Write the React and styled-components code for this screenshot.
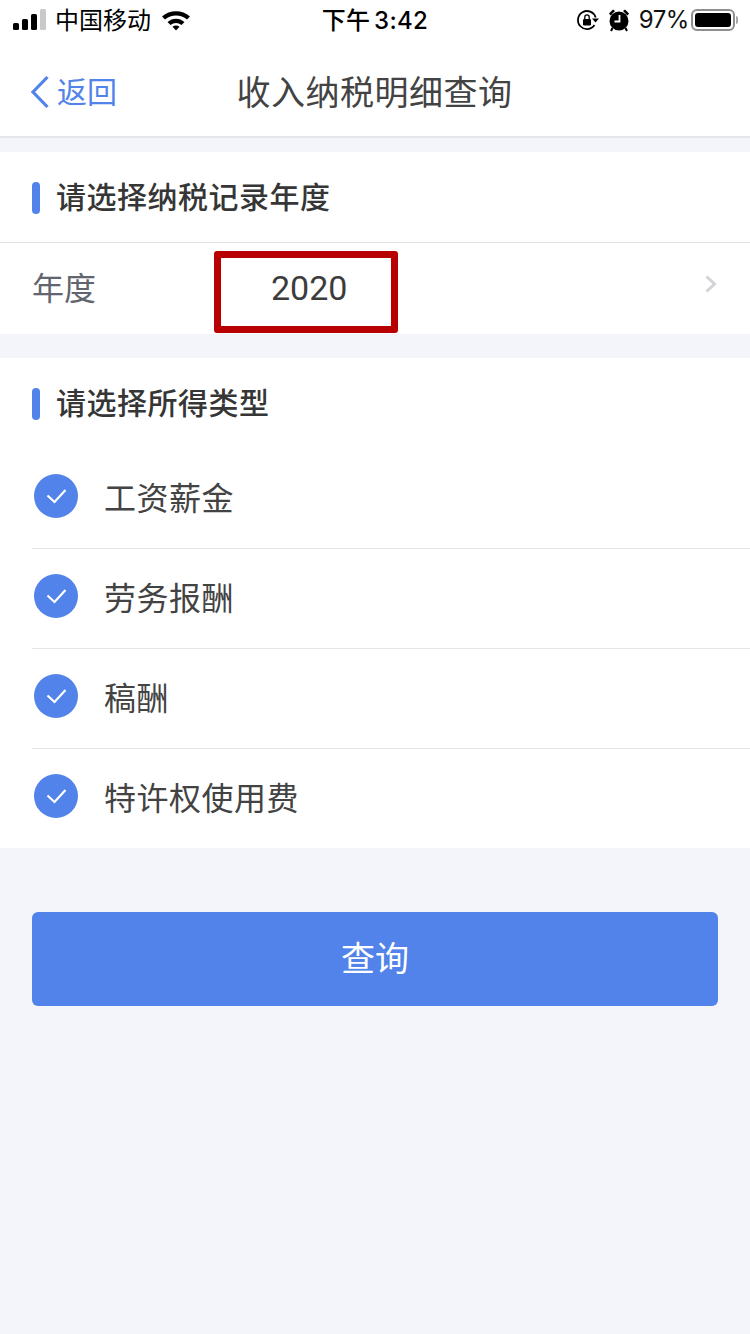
import React from 'react';
import styled, { createGlobalStyle } from 'styled-components';

const CJK = `"Noto Sans CJK SC", "Noto Sans", sans-serif`;
const STATUS = `Inter, "Noto Sans CJK SC", sans-serif`;

const incomeTypes = ['工资薪金', '劳务报酬', '稿酬', '特许权使用费'];

const GlobalStyle = createGlobalStyle`
  html, body {
    margin: 0;
    padding: 0;
    background: #f4f5fa;
    font-family: ${CJK};
  }
  * {
    box-sizing: border-box;
  }
`;

const App = () => {
  return (
    <Page>
      <GlobalStyle />
      <StatusBar>
        <StatusLeft>
          <svg width="34" height="22" viewBox="0 0 34 22">
            <rect x="1" y="14" width="6" height="7" rx="1.5" fill="#000" />
            <rect x="10" y="10" width="6" height="11" rx="1.5" fill="#000" />
            <rect x="19" y="5" width="6" height="16" rx="1.5" fill="#000" />
            <rect x="28" y="0" width="6" height="21" rx="1.5" fill="#c9c9c9" />
          </svg>
          <Carrier>中国移动</Carrier>
          <svg width="30" height="22" viewBox="0 0 30 22">
            <path d="M1 7.500C8.500 .5 21.500 .5 29 7.500L26 10.500C20 5 10 5 4 10.500Z" fill="#000" />
            <path d="M6.500 13C11.500 8.500 18.500 8.500 23.500 13L20.500 16C17 13.200 13 13.200 9.500 16Z" fill="#000" />
            <path d="M11.500 17.800C13.500 16.200 16.500 16.200 18.500 17.800L15 21.500Z" fill="#000" />
          </svg>
        </StatusLeft>
        <Clock>下午 3:42</Clock>
        <StatusRight>
          <svg width="24" height="24" viewBox="0 0 24 24">
            <path d="M19.500 17A9 9 0 1 1 20.600 9.500" fill="none" stroke="#000" strokeWidth="1.800" />
            <path d="M17 10.500h7l-3.500 4z" fill="#000" />
            <rect x="8" y="11" width="8" height="6.500" rx="1.200" fill="#000" />
            <path d="M9.800 11.500V9a2.200 2.200 0 0 1 4.400 0V11.500" fill="none" stroke="#000" strokeWidth="1.300" />
          </svg>
          <svg width="24" height="24" viewBox="0 0 24 24">
            <circle cx="12" cy="13" r="9.500" fill="#000" />
            <path d="M12.500 7V13.500H7.500" fill="none" stroke="#fff" strokeWidth="1.800" />
            <path d="M2 5.500L6 1.500L8 3L3.500 7.500Z M22 5.500L18 1.500L16 3L20.500 7.500Z" fill="#000" />
            <path d="M5.500 20L4 23M18.500 20L20 23" stroke="#000" strokeWidth="2" />
          </svg>
          <Percent>97%</Percent>
          <Battery>
            <BatteryFill />
          </Battery>
          <BatteryCap />
        </StatusRight>
      </StatusBar>

      <NavBar>
        <BackLink>
          <svg width="20" height="34" viewBox="0 0 20 34">
            <path d="M17.500 2L3 17L17.500 32" fill="none" stroke="#5283ea" strokeWidth="3.200" />
          </svg>
          <BackText>返回</BackText>
        </BackLink>
        <NavTitle>收入纳税明细查询</NavTitle>
      </NavBar>

      <Section $gap={14}>
        <SectionHead $divided>
          <Mark />
          <SectionTitle>请选择纳税记录年度</SectionTitle>
        </SectionHead>
        <YearRow>
          <YearLabel>年度</YearLabel>
          <YearValue>2020</YearValue>
          <Chevron width="14" height="20" viewBox="0 0 14 20">
            <path d="M2.500 2.500L10.500 10L2.500 17.500" fill="none" stroke="#d3d4d8" strokeWidth="3" />
          </Chevron>
          <Highlight />
        </YearRow>
      </Section>

      <Section $gap={24}>
        <SectionHead>
          <Mark />
          <SectionTitle>请选择所得类型</SectionTitle>
        </SectionHead>
        <TypeList>
          {incomeTypes.map((name) => (
            <TypeRow key={name}>
              <Check>
                <svg width="24" height="24" viewBox="0 0 24 24">
                  <path d="M3.500 11.500L10.500 18L21.500 6" fill="none" stroke="#fff" strokeWidth="2.200" />
                </svg>
              </Check>
              <TypeName>{name}</TypeName>
            </TypeRow>
          ))}
        </TypeList>
      </Section>

      <QueryButton>查询</QueryButton>
    </Page>
  );
};

const Page = styled.div`
  width: 750px;
  height: 1334px;
  overflow: hidden;
  background: #f4f5fa;
`;

const StatusBar = styled.div`
  height: 40px;
  padding: 0 12px;
  display: grid;
  grid-template-columns: 1fr auto 1fr;
  align-items: center;
  background: #fff;
  color: #000;
`;

const StatusLeft = styled.div`
  display: flex;
  align-items: center;
`;

const Carrier = styled.span`
  margin: 0 10px 0 9px;
  font-size: 24px;
  line-height: 40px;
  position: relative;
  top: -1px;
`;

const Clock = styled.span`
  font-family: ${STATUS};
  font-size: 24px;
  font-weight: 500;
  word-spacing: -3px;
  letter-spacing: 0.3px;
  line-height: 42px;
  height: 40px;
`;

const StatusRight = styled.div`
  display: flex;
  align-items: center;
  justify-content: flex-end;
  gap: 8px;
`;

const Percent = styled.span`
  font-family: ${STATUS};
  font-size: 24px;
  line-height: 40px;
  letter-spacing: -0.4px;
  color: #111;
`;

const Battery = styled.div`
  width: 44px;
  height: 22px;
  margin-left: -6px;
  padding: 2px;
  border: 2px solid #8f8f8f;
  border-radius: 6px;
`;

const BatteryFill = styled.div`
  width: 36px;
  height: 14px;
  border-radius: 3px;
  background: #000;
`;

const BatteryCap = styled.div`
  width: 2px;
  height: 8px;
  margin-left: -7px;
  background: #a9a9a9;
  border-radius: 0 2px 2px 0;
`;

const NavBar = styled.div`
  position: relative;
  height: 98px;
  display: flex;
  align-items: center;
  justify-content: center;
  padding-top: 6px;
  background: #fff;
  border-bottom: 2px solid #e5e6ea;
`;

const BackLink = styled.a`
  position: absolute;
  left: 30px;
  top: 35px;
  display: flex;
  align-items: center;
  gap: 7px;
  color: #5283ea;
`;

const BackText = styled.span`
  font-size: 30px;
  line-height: 34px;
  position: relative;
  top: -2px;
`;

const NavTitle = styled.div`
  font-size: 34px;
  line-height: 48px;
  letter-spacing: 0.5px;
  margin-left: -1px;
  color: #434343;
`;

const Section = styled.section`
  margin-top: ${(p) => p.$gap}px;
  background: #fff;
`;

const SectionHead = styled.div`
  height: ${(p) => (p.$divided ? '91px' : '90px')};
  padding: 0 0 0 32px;
  display: flex;
  align-items: center;
  gap: 16px;
  border-bottom: ${(p) => (p.$divided ? '1px solid #e2e2e4' : 'none')};
`;

const Mark = styled.i`
  display: block;
  width: 8px;
  height: 32px;
  border-radius: 4px;
  background: #5283ea;
  position: relative;
  top: 1px;
`;

const SectionTitle = styled.h2`
  margin: 0 0 4px;
  font-size: 30px;
  font-weight: 500;
  line-height: 40px;
  letter-spacing: 0.5px;
  color: #363636;
`;

const YearRow = styled.div`
  position: relative;
  height: 91px;
  padding: 0 32px;
  display: grid;
  grid-template-columns: 239px 1fr auto;
  align-items: center;
`;

const YearLabel = styled.span`
  font-size: 32px;
  line-height: 44px;
  margin-bottom: 5px;
  color: #62656e;
`;

const YearValue = styled.span`
  font-family: Roboto, sans-serif;
  font-size: 34px;
  line-height: 44px;
  margin-bottom: 2px;
  color: #3c3c3c;
`;

const Chevron = styled.svg`
  margin-bottom: 10px;
`;

const Highlight = styled.div`
  position: absolute;
  left: 214px;
  top: 8px;
  width: 184px;
  height: 82px;
  border: 7px solid #b80000;
  border-radius: 3px;
`;

const TypeList = styled.div`
  padding-left: 32px;
`;

const TypeRow = styled.div`
  height: 100px;
  display: flex;
  align-items: center;
  gap: 27px;
  padding: 0 0 5px 2px;
  border-top: 1px solid #e5e5e7;
  &:first-child {
    border-top: none;
    padding-bottom: 4px;
  }
`;

const Check = styled.span`
  width: 44px;
  height: 44px;
  display: flex;
  align-items: center;
  justify-content: center;
  border-radius: 50%;
  background: #5283ea;
`;

const TypeName = styled.span`
  font-size: 32px;
  line-height: 44px;
  letter-spacing: 0.5px;
  margin: 0 0 0 -1px;
  color: #434343;
`;

const QueryButton = styled.button`
  display: block;
  width: 686px;
  height: 94px;
  margin: 64px 0 0 32px;
  padding: 0 0 6px;
  border: none;
  border-radius: 6px;
  background: #5283ea;
  color: #fff;
  font-family: ${CJK};
  font-size: 34px;
`;

export default App;
